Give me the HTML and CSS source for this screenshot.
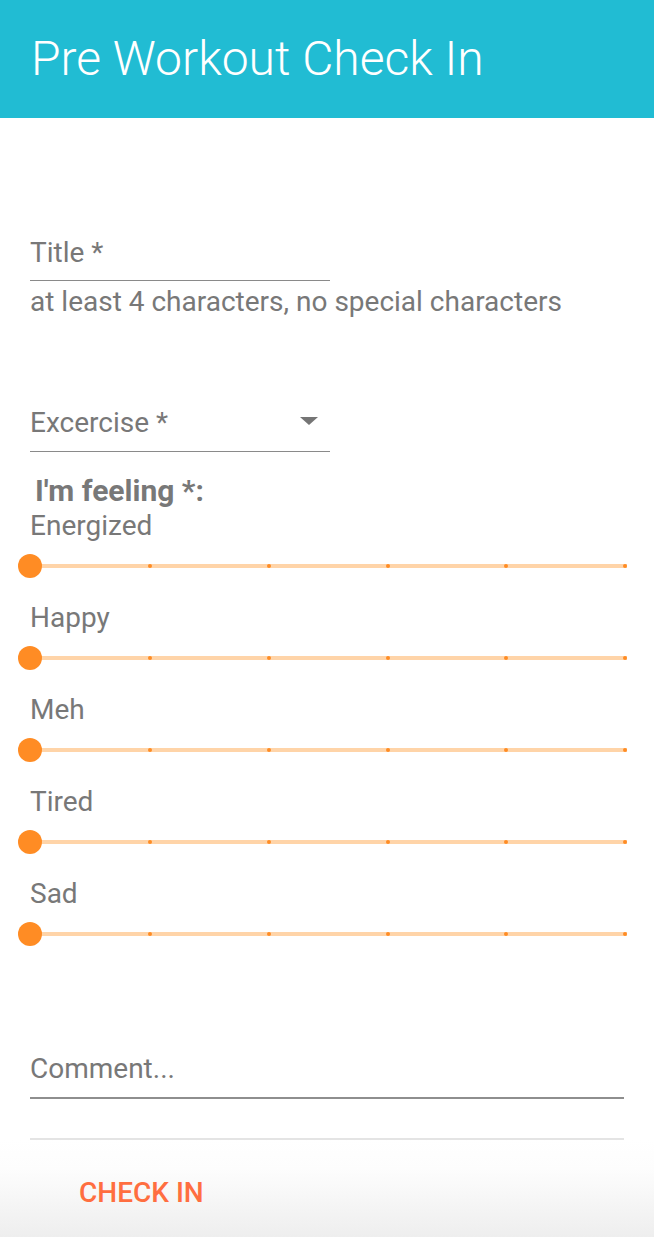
FILE: index.html
```html
<!DOCTYPE html>
<html>
<head>
<meta charset="utf-8">
<link rel="stylesheet" href="styles.css">
</head>
<body>
<header class="appbar"><h1 class="appbar-title">Pre Workout Check In</h1></header>
<main class="form">
  <div class="field field-title">
    <div class="field-line short"><span class="field-label">Title *</span></div>
    <div class="helper">at least 4 characters, no special characters</div>
  </div>
  <div class="field field-select">
    <div class="field-line short"><span class="field-label">Excercise *</span><span class="caret"></span></div>
  </div>
  <div class="feeling-head">I'm feeling *:</div>
  <div class="sliders">
    <div class="slider-row"><div class="slider-label">Energized</div><div class="slider"><span class="thumb"></span><span class="tick"></span><span class="tick"></span><span class="tick"></span><span class="tick"></span><span class="tick"></span></div></div>
    <div class="slider-row"><div class="slider-label">Happy</div><div class="slider"><span class="thumb"></span><span class="tick"></span><span class="tick"></span><span class="tick"></span><span class="tick"></span><span class="tick"></span></div></div>
    <div class="slider-row"><div class="slider-label">Meh</div><div class="slider"><span class="thumb"></span><span class="tick"></span><span class="tick"></span><span class="tick"></span><span class="tick"></span><span class="tick"></span></div></div>
    <div class="slider-row"><div class="slider-label">Tired</div><div class="slider"><span class="thumb"></span><span class="tick"></span><span class="tick"></span><span class="tick"></span><span class="tick"></span><span class="tick"></span></div></div>
    <div class="slider-row"><div class="slider-label">Sad</div><div class="slider"><span class="thumb"></span><span class="tick"></span><span class="tick"></span><span class="tick"></span><span class="tick"></span><span class="tick"></span></div></div>
  </div>
  <div class="comment"><span class="field-label">Comment...</span></div>
</main>
<footer class="actions">
  <div class="divider"></div>
  <div class="action-bar"><button class="btn">CHECK IN</button></div>
</footer>
</body>
</html>
```
FILE: styles.css
```css
* { box-sizing: border-box; }
html, body { margin: 0; padding: 0; }
body {
  width: 654px;
  height: 1238px;
  font-family: Roboto, "Noto Sans", sans-serif;
  color: #787878;
  background: #fff;
  overflow: hidden;
}
.appbar {
  height: 118px;
  background: #21bcd3;
  padding: 35px 0 0 31px;
}
.appbar-title {
  margin: 0;
  font-size: 48px;
  font-weight: 300;
  color: #fff;
  line-height: 48px;
}
.form {
  padding: 0 30px;
}
.field-label {
  font-size: 28px;
  line-height: 28px;
}
.field-title { margin-top: 121px; }
.field-line {
  display: flex;
  align-items: center;
  justify-content: space-between;
  border-bottom: 1px solid #8a8a8a;
  padding-bottom: 13px;
}
.field-line.short { width: 300px; }
.helper {
  margin-top: 7px;
  font-size: 28px;
  line-height: 28px;
}
.field-select { margin-top: 93px; }
.field-select .field-line { padding-bottom: 14px; }
.caret {
  width: 0; height: 0;
  border-left: 9px solid transparent;
  border-right: 9px solid transparent;
  border-top: 8px solid #757575;
  margin-right: 12px;
  margin-top: -4px;
}
.feeling-head {
  margin-top: 24px;
  padding-left: 5px;
  font-size: 30px;
  line-height: 30px;
  font-weight: 700;
}
.sliders { margin-top: 6px; }
.slider-row { height: 92px; }
.slider-label {
  font-size: 28px;
  line-height: 28px;
}
.slider {
  position: relative;
  margin-top: 24px;
  margin-right: -3px;
  height: 4px;
  background: #ffd4a8;
  display: flex;
  justify-content: space-between;
  align-items: center;
  padding-left: 118px;
}
.thumb {
  position: absolute;
  left: -12px;
  top: -10px;
  width: 24px;
  height: 24px;
  border-radius: 50%;
  background: #ff8c24;
}
.tick {
  width: 4px;
  height: 4px;
  border-radius: 50%;
  background: #ff8c24;
}
.comment {
  margin-top: 83px;
  border-bottom: 2px solid #8e8e8e;
  padding-bottom: 14px;
}
.actions {
  padding-top: 39px;
}
.divider {
  margin: 0 30px;
  height: 2px;
  background: #e4e4e4;
}
.action-bar {
  height: 97px;
  background: linear-gradient(#ffffff 0%, #fdfdfd 30%, #eeeeee 100%);
  display: flex;
  align-items: center;
  padding: 9px 0 0 79px;
}
.btn {
  border: 0;
  background: none;
  padding: 0;
  font-family: Roboto, "Noto Sans", sans-serif;
  font-size: 28px;
  font-weight: 500;
  color: #ff6e40;
  line-height: 28px;
}
```
